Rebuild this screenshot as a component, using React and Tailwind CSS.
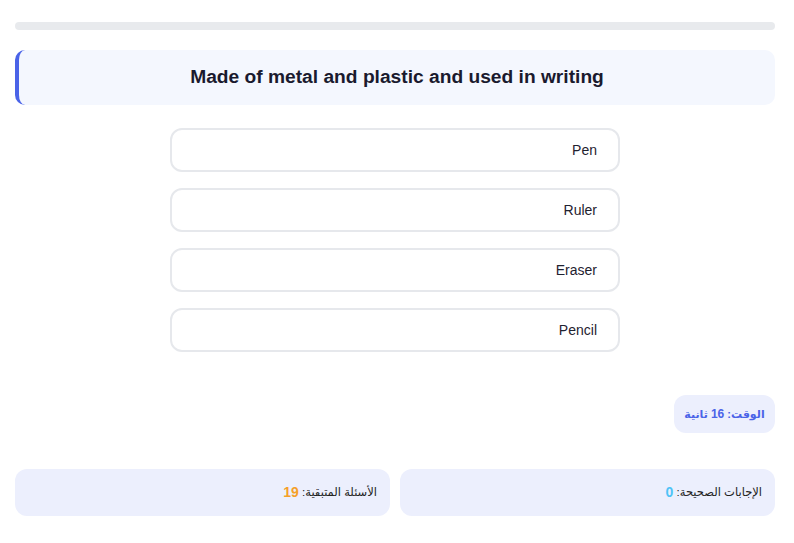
export default function App() {
  const options = ["Pen", "Ruler", "Eraser", "Pencil"];
  return (
    <div
      className="min-h-[543px] bg-white pl-[15px] pr-[19px] pt-[22px]"
      style={{ fontFamily: '"Liberation Sans", "DejaVu Sans", Arial, sans-serif' }}
    >
      <div className="h-[8px] w-full rounded-full bg-[#e8eaed]" />
      <div className="mt-[20px] flex h-[55px] items-center justify-center rounded-[10px] border-l-4 border-[#4a63e8] bg-[#f4f7fe]">
        <h1 className="text-[19.2px] font-bold text-[#1a1a2e]">
          Made of metal and plastic and used in writing
        </h1>
      </div>
      <div className="mt-[23px] flex flex-col items-center gap-[16px]">
        {options.map((o) => (
          <button
            key={o}
            className="flex h-[44px] w-[450px] items-center justify-end rounded-[12px] border-2 border-[#e6e8ec] bg-white pr-[21px] text-[14px] text-[#1f2230]"
          >
            {o}
          </button>
        ))}
      </div>
      <div dir="rtl" className="mt-[43px] flex">
        <div className="flex h-[38px] w-[101px] items-center justify-center rounded-[12px] bg-[#eceffd] text-[11px] font-bold text-[#4a63e8]">
          الوقت:&nbsp;<span className="text-[12px]">16</span>&nbsp;ثانية
        </div>
      </div>
      <div dir="rtl" className="mt-[36px] grid grid-cols-2 gap-[10px]">
        <div className="flex h-[47px] items-center rounded-[12px] bg-[#eceffd] px-[13px] text-[11.5px] text-[#222]">
          الإجابات الصحيحة:&nbsp;<span className="font-bold text-[14px] text-[#4fc3f7]">0</span>
        </div>
        <div className="flex h-[47px] items-center rounded-[12px] bg-[#eceffd] px-[13px] text-[11.5px] text-[#222]">
          الأسئلة المتبقية:&nbsp;<span className="font-bold text-[14px] text-[#f5a02a]">19</span>
        </div>
      </div>
    </div>
  );
}
